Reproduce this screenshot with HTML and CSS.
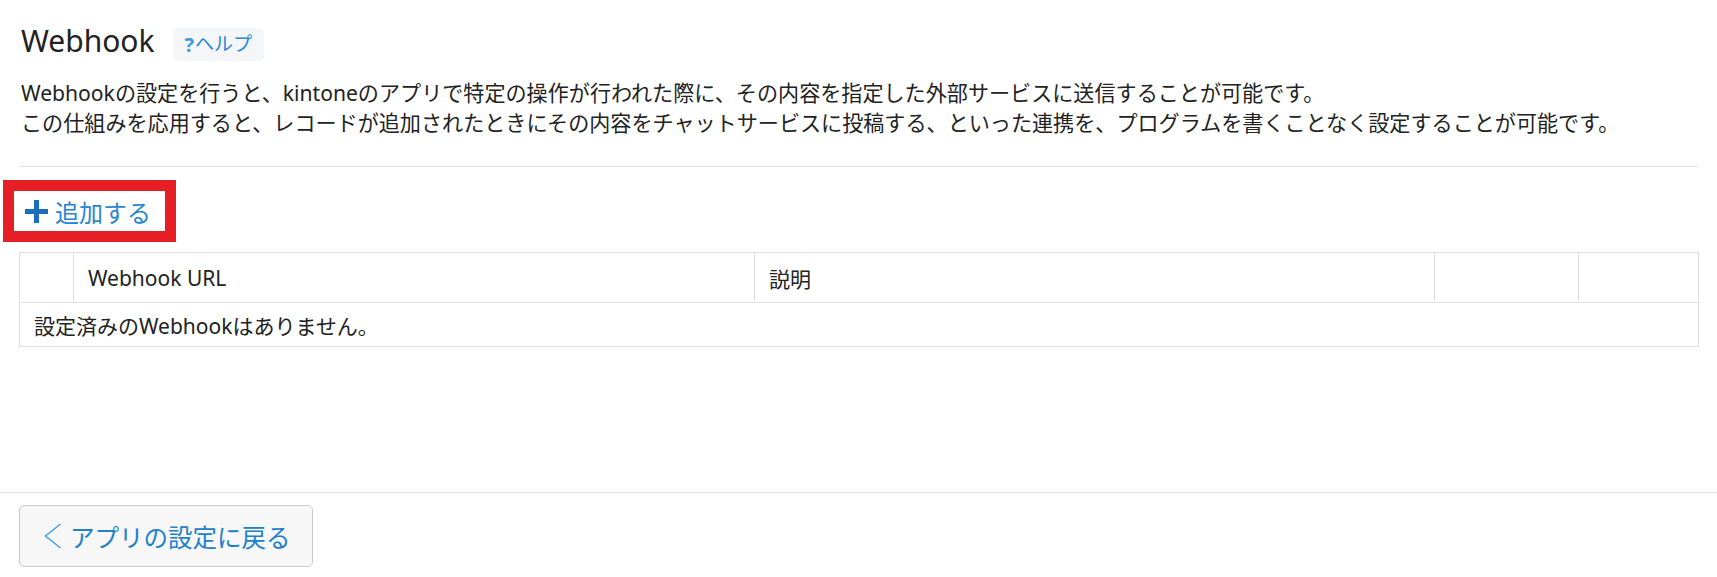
FILE: index.html
```html
<!DOCTYPE html>
<html lang="ja">
<head>
<meta charset="utf-8">
<title>Webhook</title>
<link rel="stylesheet" href="styles.css">
</head>
<body>
<div class="page">
  <main class="content">
    <div class="title-row">
      <h1 class="title">Webhook</h1>
      <a class="help" href="#"><span class="help-q">?</span>ヘルプ</a>
    </div>
    <p class="desc">Webhookの設定を行うと、kintoneのアプリで特定の操作が行われた際に、その内容を指定した外部サービスに送信することが可能です。<br>この仕組みを応用すると、レコードが追加されたときにその内容をチャットサービスに投稿する、といった連携を、プログラムを書くことなく設定することが可能です。</p>
    <hr class="sep">
    <div class="highlight">
      <button class="add-btn" type="button">
        <svg class="plus" width="23" height="23" viewBox="0 0 23 23" aria-hidden="true"><rect x="9" y="0" width="5" height="23"/><rect x="0" y="9" width="23" height="5"/></svg>
        <span>追加する</span>
      </button>
    </div>
    <table class="hooks">
      <colgroup>
        <col class="c-num"><col class="c-url"><col class="c-desc"><col class="c-a"><col class="c-b">
      </colgroup>
      <thead>
        <tr><th></th><th>Webhook URL</th><th>説明</th><th></th><th></th></tr>
      </thead>
      <tbody>
        <tr><td colspan="5">設定済みのWebhookはありません。</td></tr>
      </tbody>
    </table>
  </main>
  <footer class="footer">
    <button class="back-btn" type="button">
      <svg class="chev" width="18" height="26" viewBox="0 0 18 26" aria-hidden="true"><polyline points="16.5,1 1.5,13 16.5,25"/></svg>
      <span>アプリの設定に戻る</span>
    </button>
  </footer>
</div>
</body>
</html>
```
FILE: styles.css
```css
html, body {
  margin: 0;
  padding: 0;
  background: #fff;
}
body {
  font-family: "Noto Sans", "Noto Sans CJK JP", sans-serif;
  color: #333;
}
.page {
  min-height: 577px;
  display: flex;
  flex-direction: column;
}
.content {
  padding: 21px 19px 0 19px;
}
.title-row {
  display: flex;
  align-items: flex-end;
  margin-left: 2px;
}
.title {
  margin: 0;
  font-size: 30px;
  line-height: 40px;
  font-weight: normal;
  color: #222;
}
.help {
  margin-left: 18px;
  height: 33px;
  line-height: 33px;
  padding: 0 12px;
  background: #f5f6f7;
  border-radius: 5px;
  font-size: 19px;
  color: #2b8ad3;
  text-decoration: none;
  display: flex;
  align-items: center;
}
.help-q {
  font-weight: bold;
  font-size: 20px;
  color: #3a9be0;
  margin-right: 1px;
}
.desc {
  margin: 17px 0 0 2px;
  font-size: 21.1px;
  line-height: 30px;
  color: #222;
}
.sep {
  margin: 28px 0 0 0;
  border: 0;
  border-top: 1px solid #e3e3e3;
  height: 0;
}
.highlight {
  display: inline-block;
  margin: 13px 0 0 -16px;
  border: 11px solid #e61e25;
  background: #fff;
}
.add-btn {
  display: flex;
  align-items: center;
  width: 151px;
  height: 40px;
  padding: 0 0 0 11px;
  border: 0;
  background: #fff;
  font-family: inherit;
  font-size: 24px;
  color: #2886d0;
  cursor: pointer;
}
.plus {
  fill: #1b6fba;
  margin-right: 7px;
  flex: none;
}
.hooks {
  margin-top: 10px;
  width: 100%;
  border-collapse: collapse;
  table-layout: fixed;
  font-size: 21px;
  color: #222;
}
.c-num { width: 54px; }
.c-url { width: 681px; }
.c-desc { width: 680px; }
.c-a { width: 144px; }
.c-b { width: 120px; }
.hooks th, .hooks td {
  border: 1px solid #e0e0e0;
  text-align: left;
  font-weight: normal;
  padding: 0 14px;
}
.hooks th {
  height: 49px;
}
.hooks td {
  height: 43px;
}
.footer {
  margin-top: auto;
  border-top: 1px solid #e0e0e0;
  padding: 12px 19px 10px 19px;
}
.back-btn {
  display: flex;
  align-items: center;
  width: 294px;
  height: 62px;
  padding: 0 0 0 24px;
  background: #f7f7f7;
  border: 1px solid #c9c9c9;
  border-radius: 5px;
  font-family: inherit;
  font-size: 24.5px;
  color: #2080cc;
  cursor: pointer;
}
.chev {
  flex: none;
  fill: none;
  stroke: #4aa3e0;
  stroke-width: 1.6;
  margin-right: 8px;
}
```
